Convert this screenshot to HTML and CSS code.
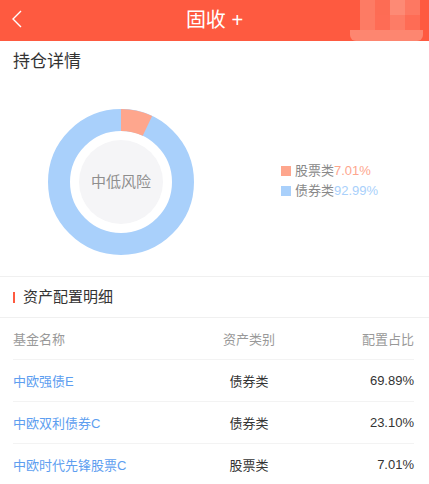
FILE: index.html
```html
<!DOCTYPE html>
<html lang="zh-CN">
<head>
  <meta charset="UTF-8" />
  <meta name="viewport" content="width=device-width, initial-scale=1" />
  <title>固收+</title>
  <link rel="stylesheet" href="styles.css">
</head>
<body>
  <header class="nav">
    <a href="#" class="nav-back">
      <svg width="12" height="18" viewBox="0 0 12 18"><polyline points="10,1 2,9 10,17" fill="none" stroke="#fff" stroke-width="1.4" /></svg>
    </a>
    <h1 class="nav-title">固收 +</h1>
    <div class="nav-mosaic">
      <span class="t1"></span><span class="t2"></span><span class="t3"></span><span class="t4"></span>
      <span class="t1"></span><span class="t5"></span><span class="t6"></span><span class="t5"></span>
      <span class="mosaic-base"></span>
    </div>
  </header>

  <section class="holding">
    <h2 class="holding-title">持仓详情</h2>
    <div class="chart-row">
      <div class="donut">
        <svg width="146" height="146" viewBox="0 0 146 146">
          <circle cx="73" cy="73" r="62" fill="none" stroke="#a9d0fb" stroke-width="22" />
          <circle cx="73" cy="73" r="62" fill="none" stroke="#fea68d" stroke-width="22"
            stroke-dasharray="27.31 400" transform="rotate(-90 73 73)" />
          <circle cx="73" cy="73" r="42" fill="#f5f5f7" />
        </svg>
        <span class="donut-label">中低风险</span>
      </div>
      <ul class="legend">
        <li><i class="dot dot-stock"></i>股票类<span class="pct-stock">7.01%</span></li>
        <li><i class="dot dot-bond"></i>债券类<span class="pct-bond">92.99%</span></li>
      </ul>
    </div>
  </section>

  <section class="detail">
    <h2 class="detail-title">资产配置明细</h2>
    <div class="table">
      <div class="row row-head">
        <span>基金名称</span><span class="c-mid">资产类别</span><span class="c-right">配置占比</span>
      </div>
      <div class="row">
        <a href="#" class="fund">中欧强债E</a><span class="c-mid">债券类</span><span class="c-right">69.89%</span>
      </div>
      <div class="row">
        <a href="#" class="fund">中欧双利债券C</a><span class="c-mid">债券类</span><span class="c-right">23.10%</span>
      </div>
      <div class="row">
        <a href="#" class="fund">中欧时代先锋股票C</a><span class="c-mid">股票类</span><span class="c-right">7.01%</span>
      </div>
    </div>
  </section>
</body>
</html>
```

FILE: styles.css
```css
body { margin: 0; background: #fff; font-family: "Liberation Sans", "Noto Sans CJK SC", sans-serif; color: #333; overflow: hidden; }
h1, h2, ul { margin: 0; padding: 0; font-weight: normal; }

.nav { position: relative; height: 41px; background: #fe5a40; display: flex; align-items: center; justify-content: center; }
.nav-back { position: absolute; left: 11px; top: 10px; display: block; line-height: 0; }
.nav-title { color: #fff; font-size: 20px; line-height: 41px; }
.nav-mosaic { position: absolute; left: 350px; top: 0; width: 73px; height: 41px; display: grid; grid-template-columns: 10px 15px 15px 15px 15px 3px; grid-template-rows: 15px 15px 11px; }
.nav-mosaic span:nth-child(1) { grid-column: 2; }
.nav-mosaic span:nth-child(5) { grid-column: 2; }
.t1 { background: #fd7b64; }
.t2 { background: #fd6c54; }
.t3 { background: #fd8a75; }
.t4 { background: #fd7862; }
.t5 { background: #fe6c55; }
.t6 { background: #fd7c66; }
.mosaic-base { grid-column: 1 / 7; grid-row: 3; background: #fd8670; border-radius: 0 0 6px 6px; }

.holding { border-bottom: 1px solid #f0f0f0; }
.holding-title { font-size: 17px; line-height: 42px; padding: 0 13px; color: #333; }
.chart-row { display: flex; align-items: center; padding: 26px 0 21px 48px; }
.donut { position: relative; width: 146px; height: 146px; }
.donut svg { display: block; }
.donut-label { position: absolute; left: 0; right: 0; top: 62px; text-align: center; font-size: 15px; line-height: 22px; color: #8e8e8e; }
.legend { list-style: none; margin-left: 87px; margin-top: -2px; }
.legend li { font-size: 13px; line-height: 20px; color: #888; display: flex; align-items: center; }
.dot { display: inline-block; width: 10px; height: 10px; margin-right: 4px; }
.dot-stock { background: #fea68d; }
.dot-bond { background: #a9d0fb; }
.pct-stock { color: #fea68d; }
.pct-bond { color: #a9d0fb; }

.detail-title { position: relative; font-size: 15px; line-height: 40px; padding-left: 23px; color: #333; border-bottom: 1px solid #f0f0f0; }
.detail-title::before { content: ""; position: absolute; left: 13px; top: 15px; width: 2px; height: 11px; background: #fe5a40; }
.table { padding: 0 15px 0 13px; }
.row { display: grid; grid-template-columns: 1fr 110px 110px; height: 41px; align-items: center; font-size: 13px; color: #333; border-bottom: 1px solid #f3f3f3; }
.row:last-child { border-bottom: none; }
.row-head { color: #999; }
.c-mid { text-align: center; }
.c-right { text-align: right; }
.fund { color: #5d9ef0; text-decoration: none; }
```
